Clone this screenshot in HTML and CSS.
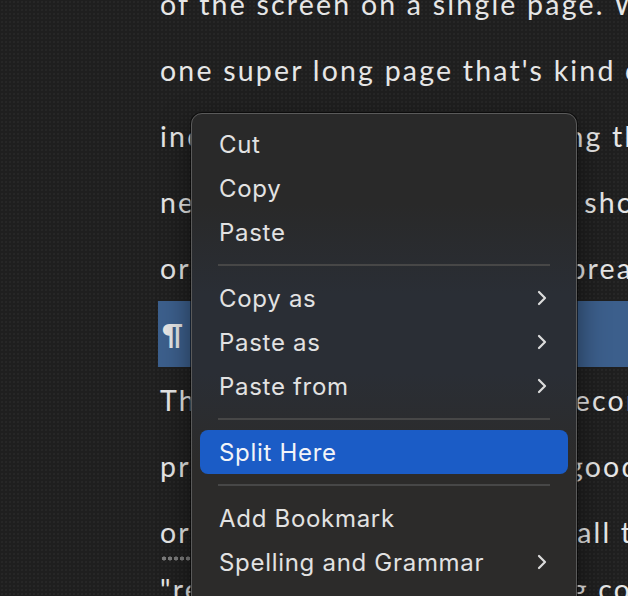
FILE: index.html
```html
<!DOCTYPE html>
<html>
<head>
<meta charset="utf-8">
<link rel="stylesheet" href="styles.css">
</head>
<body>
<div class="page">
  <div class="doc">
    <p class="line">of the screen on a single page. We decided</p>
    <p class="line">one super long page that's kind of like a scroll</p>
    <p class="line">including all of those, bringing the text</p>
    <p class="line">never totally sure where you should</p>
    <p class="line">or where you'll want a page break</p>
    <p class="line sel">¶</p>
    <p class="line">The other option there is a second</p>
    <p class="line">pretty well, but that's not a good</p>
    <p class="line">or intuitive way for showing all the</p>
    <div class="dots"><span></span></div>
    <p class="line">"real" pages without breaking content</p>
  </div>

  <div class="menu">
    <div class="item">Cut</div>
    <div class="item">Copy</div>
    <div class="item">Paste</div>
    <div class="sep"></div>
    <div class="item">Copy as<svg class="chev" viewBox="0 0 10 16"><polyline points="2,2 8,8 2,14"/></svg></div>
    <div class="item">Paste as<svg class="chev" viewBox="0 0 10 16"><polyline points="2,2 8,8 2,14"/></svg></div>
    <div class="item">Paste from<svg class="chev" viewBox="0 0 10 16"><polyline points="2,2 8,8 2,14"/></svg></div>
    <div class="sep"></div>
    <div class="item active">Split Here</div>
    <div class="sep"></div>
    <div class="item">Add Bookmark</div>
    <div class="item">Spelling and Grammar<svg class="chev" viewBox="0 0 10 16"><polyline points="2,2 8,8 2,14"/></svg></div>
    <div class="item">Substitutions<svg class="chev" viewBox="0 0 10 16"><polyline points="2,2 8,8 2,14"/></svg></div>
  </div>
</div>
</body>
</html>
```

FILE: styles.css
```css
html, body {
  margin: 0;
  padding: 0;
}
body {
  width: 628px;
  height: 596px;
  overflow: hidden;
  background-color: #1f1f1f;
  background-image: radial-gradient(circle, #262626 0.7px, transparent 1.1px);
  background-size: 4px 4px;
}
.page {
  position: relative;
  width: 628px;
  height: 596px;
  overflow: hidden;
}
.doc {
  margin-top: -29px;
  padding-left: 160px;
  font-family: "Lato", "Noto Sans", sans-serif;
  font-size: 28.5px;
  letter-spacing: 2.2px;
  line-height: 66px;
  color: #e6e6e6;
  white-space: nowrap;
}
.line {
  margin: 0;
  height: 66px;
}
.sel {
  margin-left: -2px;
  padding-left: 4px;
  background: #3c5f8c;
  font-weight: 700;
}
.dots {
  height: 0;
}
.dots span {
  display: block;
  width: 31px;
  height: 5px;
  margin-top: -9px;
  margin-left: 1px;
  background-image: radial-gradient(circle, #7c7c7c 1.8px, transparent 2.3px);
  background-size: 6px 5px;
}
.menu {
  position: absolute;
  left: 191px;
  top: 113px;
  width: 368px;
  padding: 8px;
  border: 1px solid #5a5a5a;
  border-radius: 11px;
  background: linear-gradient(to bottom, #292929 0px, #292929 90px, #2a2e35 180px, #2a2e35 260px, #2c2b2a 350px, #2c2b2a 600px);
  box-shadow: 0 0 0 1px rgba(0,0,0,0.55), 0 12px 30px rgba(0,0,0,0.5);
  font-family: "Inter", "Roboto", sans-serif;
  font-size: 24px;
  letter-spacing: 0.7px;
  color: #e2e2e2;
}
.item {
  display: flex;
  align-items: center;
  justify-content: space-between;
  height: 44px;
  padding: 0 21px 0 19px;
  border-radius: 8px;
}
.item.active {
  background: #1b5cc6;
  color: #f2f4f8;
}
.chev {
  width: 10px;
  height: 16px;
  fill: none;
  stroke: #dcdcdc;
  stroke-width: 2.2;
  stroke-linecap: round;
  stroke-linejoin: round;
}
.sep {
  height: 22px;
  display: flex;
  align-items: center;
  padding: 0 18px;
}
.sep::before {
  content: "";
  flex: 1;
  height: 2px;
  background: #474747;
}
```
